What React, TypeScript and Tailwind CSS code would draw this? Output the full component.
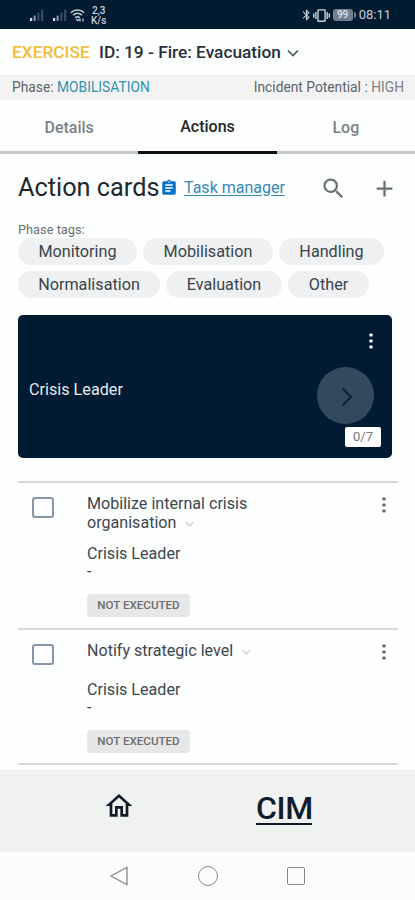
import { MdAdd, MdAssignment, MdBluetooth, MdOutlineHome, MdSearch, MdVibration } from "react-icons/md";

const TABS = [
  { label: "Details", active: false },
  { label: "Actions", active: true },
  { label: "Log", active: false },
];

const TAG_ROWS = [
  [
    { label: "Monitoring", width: "w-[119px]" },
    { label: "Mobilisation", width: "w-[130px]" },
    { label: "Handling", width: "w-[105px]" },
  ],
  [
    { label: "Normalisation", width: "w-[142px]" },
    { label: "Evaluation", width: "w-[116px]" },
    { label: "Other", width: "w-[81px]" },
  ],
];

const ACTIONS = [
  {
    title: ["Mobilize internal crisis", "organisation"],
    role: "Crisis Leader",
    status: "NOT EXECUTED",
    height: "h-[147px]",
    roleGap: "mt-[12px]",
  },
  {
    title: ["Notify strategic level"],
    role: "Crisis Leader",
    status: "NOT EXECUTED",
    height: "h-[135px]",
    roleGap: "mt-[20px]",
  },
];

function ChevronDown({ className }: { className?: string }) {
  return (
    <svg className={className} fill="none" viewBox="0 0 12 8" stroke="currentColor" strokeWidth={1.6}>
      <path d="M1 1.5l5 5 5-5" />
    </svg>
  );
}

function KebabIcon({ className }: { className?: string }) {
  return (
    <svg className={className} viewBox="0 0 4 16" fill="currentColor">
      <rect x="0.4" y="0.4" width="3.2" height="3.2" rx="0.8" />
      <rect x="0.4" y="6.4" width="3.2" height="3.2" rx="0.8" />
      <rect x="0.4" y="12.4" width="3.2" height="3.2" rx="0.8" />
    </svg>
  );
}

function SignalIcon({ className }: { className?: string }) {
  return (
    <svg className={className} viewBox="0 0 14 12">
      <path d="M0 9h2.2v3H0z" fill="#d5dde4" />
      <path d="M3.6 6.5h2v5.5h-2z" fill="#8796a4" />
      <path d="M7.4 3.5h2v8.5h-2zM11.2 0.5h2v11.5h-2z" fill="#394f63" />
    </svg>
  );
}

function WifiIcon({ className }: { className?: string }) {
  return (
    <svg className={className} fill="none" viewBox="0 0 15 13" stroke="#c3ccd4" strokeWidth={1.5}>
      <path d="M0.8 3.8C4.5 0.2 10.5 0.2 14.2 3.8M3 6.3c2.6-2.6 6.4-2.6 9 0M5.2 8.7c1.3-1.3 3.3-1.3 4.6 0" />
      <path d="M6.2 10l1.5 1.6L9 10.2M10 9.5v3M13 9.5v3" strokeWidth={1.3} />
    </svg>
  );
}

function StatusBar() {
  return (
    <div className="flex h-[29px] shrink-0 items-center bg-[#011b33] pl-[30px] pr-[24px] pt-px text-[#c9d1d8]">
      <SignalIcon className="h-[12px] w-[14px]" />
      <SignalIcon className="ml-[9px] h-[12px] w-[14px]" />
      <WifiIcon className="ml-[3px] h-[13px] w-[15px]" />
      <div className="ml-[6px] mt-px text-center text-[10px] font-medium leading-[10px]">
        <div>2,3</div>
        <div>K/s</div>
      </div>
      <div className="ml-auto flex items-center">
        <MdBluetooth className="h-[14px] w-[13px]" />
        <MdVibration className="h-[17px] w-[17px]" />
        <div className="ml-[3px] flex items-center">
          <span className="flex h-[12px] w-[20px] items-center justify-center rounded-[3px] bg-[#71808e] text-[10px] font-medium leading-none text-[#dfe5ea]">
            99
          </span>
          <span className="ml-px h-[6px] w-[2px] rounded-r bg-[#71808e]" />
        </div>
        <span className="ml-[3px] text-[13px]">08:11</span>
      </div>
    </div>
  );
}

function ActionItem({ action }: { action: (typeof ACTIONS)[number] }) {
  const last = action.title.length - 1;
  return (
    <div className={`flex border-t-2 border-[#d6dadb] ${action.height}`}>
      <span className="ml-[14px] mt-[14px] h-[21px] w-[22px] shrink-0 rounded-[3px] border-2 border-[#8596aa] bg-white" />
      <div className="ml-[33px] mt-[11px] flex-1 text-[16.1px] leading-[19px] text-[#3c474e]">
        {action.title.map((line, i) => (
          <div key={line} className="flex items-center whitespace-nowrap">
            {line}
            {i === last && <ChevronDown className="ml-[9px] mt-[3px] h-[6px] w-[9px] text-[#c3c9cc]" />}
          </div>
        ))}
        <div className={action.roleGap}>{action.role}</div>
        <div className="leading-[18px]">-</div>
        <span className="mt-[13px] flex h-[23px] w-[103px] items-center justify-center rounded-[4px] bg-[#e6e7e7] text-[11.6px] font-medium text-[#6b6e70]">
          {action.status}
        </span>
      </div>
      <KebabIcon className="mr-[12px] mt-[14px] h-[16px] w-[4px] text-[#646c70]" />
    </div>
  );
}

export default function App() {
  return (
    <main className="flex h-[900px] w-[415px] flex-col overflow-hidden bg-[#fdfefe] font-['Roboto',sans-serif]">
      <StatusBar />

      {/* Exercise title */}
      <header className="flex h-[46px] shrink-0 items-center whitespace-nowrap pl-[12px] pt-[2px] text-[17.3px] font-medium">
        <span className="w-[78px] text-[#f2bd38]">EXERCISE</span>
        <span className="ml-[9px] text-[#26303a]">ID: 19 - Fire: Evacuation</span>
        <ChevronDown className="ml-[6px] h-[8px] w-[12px] text-[#4c545a]" />
      </header>

      <div className="flex h-[25px] shrink-0 items-center justify-between whitespace-nowrap bg-[#f3f3f3] pl-[12px] pr-[11px] text-[13.8px] text-[#5d6468]">
        <div>
          Phase: <span className="text-[#2f93ab]">MOBILISATION</span>
        </div>
        <div>
          Incident Potential : <span className="text-[#7d8184]">HIGH</span>
        </div>
      </div>

      {/* Tabs */}
      <nav className="grid h-[54px] shrink-0 grid-cols-3">
        {TABS.map((tab) => (
          <div
            key={tab.label}
            className={[
              "flex items-center justify-center border-b-[3px] text-[16px] font-medium",
              tab.active ? "border-[#0b1015] pt-[2px] text-[#20262b]" : "border-[#c5c9ca] pt-[4px] text-[#7b8286]",
            ].join(" ")}
          >
            {tab.label}
          </div>
        ))}
      </nav>

      <section className="h-[616px] shrink-0 overflow-hidden px-[18px]">
        <div className="flex h-[69px] items-center whitespace-nowrap">
          <h1 className="-mt-[2px] w-[142px] text-[25.3px] text-[#20272d]">Action cards</h1>
          <MdAssignment className="-mt-[2px] h-[18px] w-[18px] text-[#0873c4]" />
          <a className="-mt-[2px] ml-[6px] text-[16px] text-[#3688b8] underline underline-offset-2">
            Task manager
          </a>
          <MdSearch className="ml-auto h-[27px] w-[27px] text-[#6a7073]" />
          <MdAdd className="-mr-px ml-[24px] h-[27px] w-[27px] text-[#6a7073]" />
        </div>

        {/* Phase tags */}
        <div className="h-[15px] text-[12.8px] leading-[14px] text-[#6a7175]">Phase tags:</div>
        <div className="flex flex-col gap-[6px]">
          {TAG_ROWS.map((row, i) => (
            <div key={i} className="flex gap-[6px]">
              {row.map((tag) => (
                <span
                  key={tag.label}
                  className={`flex h-[27px] shrink-0 items-center justify-center rounded-full bg-[#eff0f1] pt-px text-[16.2px] text-[#39444b] ${tag.width}`}
                >
                  {tag.label}
                </span>
              ))}
            </div>
          ))}
        </div>

        {/* Role card */}
        <div className="mt-[17px] flex h-[143px] w-[374px] items-center justify-between rounded-[5px] bg-[#011b33] px-[11px]">
          <span className="mt-[8px] text-[16.2px] text-[#e6eaed]">Crisis Leader</span>
          <div className="flex h-full flex-col items-end pt-[18px]">
            <KebabIcon className="mr-[8px] h-[16px] w-[4px] text-white" />
            <div className="mr-[7px] mt-[18px] flex h-[57px] w-[57px] items-center justify-center rounded-full bg-[#334a5e]">
              <svg className="ml-[3px] mt-[3px] h-[20px] w-[12px]" fill="none" viewBox="0 0 12 20" stroke="#0b2339" strokeWidth={2}>
                <path d="M1.5 1.5L10 10l-8.5 8.5" />
              </svg>
            </div>
            <span className="mt-[3px] flex h-[20px] w-[36px] items-center justify-center rounded-[2px] bg-white text-[13px] text-[#777b7e]">
              0/7
            </span>
          </div>
        </div>

        {/* Action list */}
        <div className="mt-[23px] w-[380px] border-b-2 border-[#d6dadb]">
          {ACTIONS.map((action) => (
            <ActionItem key={action.title[0]} action={action} />
          ))}
        </div>
      </section>

      <footer className="flex h-[82px] shrink-0 bg-[#f0f1f1]">
        <MdOutlineHome className="ml-[103px] mt-[20px] h-[32px] w-[32px] text-[#0f1c2b]" />
        <span className="ml-[121px] mt-[21px] h-[34px] w-[56px] border-b-2 border-[#0f1c2b] text-[32px] font-medium leading-[34px] tracking-[-0.4px] text-[#0f1c2b]">
          CIM
        </span>
      </footer>

      {/* System navigation */}
      <div className="flex h-[48px] shrink-0 items-center bg-[#fcfcfc] pl-[110px] text-[#85888a]">
        <svg className="h-[20px] w-[18px]" fill="none" viewBox="0 0 18 20" stroke="currentColor" strokeWidth={1.3}>
          <path d="M17 1.2v17.6L1 10z" strokeLinejoin="round" />
        </svg>
        <span className="ml-[70px] h-[20px] w-[20px] rounded-full border border-current" />
        <span className="ml-[69px] h-[18px] w-[18px] rounded-[2px] border border-current" />
      </div>
    </main>
  );
}
